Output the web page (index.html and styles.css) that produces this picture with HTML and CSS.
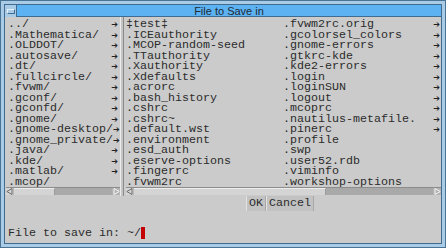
FILE: index.html
```html
<!DOCTYPE html>
<html lang="en">
<head>
  <meta charset="UTF-8" />
  <title>File to Save in</title>
  <link rel="stylesheet" href="styles.css">
</head>
<body>
  <div class="window">
    <div class="titlebar">
      <div class="menu-btn"><span></span></div>
      <div class="title">File to Save in</div>
    </div>
    <div class="content">
      <div class="panes">
        <!-- directories -->
        <div class="pane dirs">
          <ul class="list">
            <li class="dir">../</li>
            <li class="dir">.Mathematica/</li>
            <li class="dir">.OLDDOT/</li>
            <li class="dir">.autosave/</li>
            <li class="dir">.dt/</li>
            <li class="dir">.fullcircle/</li>
            <li class="dir">.fvwm/</li>
            <li class="dir">.gconf/</li>
            <li class="dir">.gconfd/</li>
            <li class="dir">.gnome/</li>
            <li class="dir">.gnome-desktop/</li>
            <li class="dir">.gnome_private/</li>
            <li class="dir">.java/</li>
            <li class="dir">.kde/</li>
            <li class="dir">.matlab/</li>
            <li>.mcop/</li>
          </ul>
          <div class="hscroll">
            <span class="sb-btn sb-left"><svg width="7" height="7" viewBox="0 0 7 7"><path d="M6 0.5 L0.8 3.5 L6 6.5 Z" fill="none" stroke="#6a6a6a" stroke-width="1"/></svg></span>
            <span class="sb-track"><span class="sb-thumb thumb-dirs"></span></span>
            <span class="sb-btn sb-right"><svg width="7" height="7" viewBox="0 0 7 7"><path d="M1 0.5 L6.2 3.5 L1 6.5 Z" fill="none" stroke="#f4f4f4" stroke-width="1"/></svg></span>
          </div>
        </div>
        <div class="sash"></div>
        <!-- files -->
        <div class="pane files">
          <div class="cols">
            <ul class="list col-a">
              <li>‡test‡</li>
              <li>.ICEauthority</li>
              <li>.MCOP-random-seed</li>
              <li>.TTauthority</li>
              <li>.Xauthority</li>
              <li>.Xdefaults</li>
              <li>.acrorc</li>
              <li>.bash_history</li>
              <li>.cshrc</li>
              <li>.cshrc~</li>
              <li>.default.wst</li>
              <li>.environment</li>
              <li>.esd_auth</li>
              <li>.eserve-options</li>
              <li>.fingerrc</li>
              <li>.fvwm2rc</li>
            </ul>
            <ul class="list col-b">
              <li class="dir">.fvwm2rc.orig</li>
              <li class="dir">.gcolorsel_colors</li>
              <li class="dir">.gnome-errors</li>
              <li class="dir">.gtkrc-kde</li>
              <li class="dir">.kde2-errors</li>
              <li class="dir">.login</li>
              <li class="dir">.loginSUN</li>
              <li class="dir">.logout</li>
              <li class="dir">.mcoprc</li>
              <li class="dir">.nautilus-metafile.</li>
              <li class="dir">.pinerc</li>
              <li>.profile</li>
              <li>.swp</li>
              <li>.user52.rdb</li>
              <li>.viminfo</li>
              <li>.workshop-options</li>
            </ul>
          </div>
          <div class="hscroll">
            <span class="sb-btn sb-left"><svg width="7" height="7" viewBox="0 0 7 7"><path d="M6 0.5 L0.8 3.5 L6 6.5 Z" fill="none" stroke="#6a6a6a" stroke-width="1"/></svg></span>
            <span class="sb-track"><span class="sb-thumb thumb-files"></span></span>
            <span class="sb-btn sb-right"><svg width="7" height="7" viewBox="0 0 7 7"><path d="M1 0.5 L6.2 3.5 L1 6.5 Z" fill="none" stroke="#f4f4f4" stroke-width="1"/></svg></span>
          </div>
        </div>
      </div>

      <div class="buttons">
        <button class="btn">OK</button><button class="btn">Cancel</button>
      </div>

      <div class="prompt">File to save in: ~/<span class="cursor"></span></div>
    </div>
  </div>
</body>
</html>
```

FILE: styles.css
```css
* {
  box-sizing: border-box;
  margin: 0;
  padding: 0;
}

body {
  width: 446px;
  height: 248px;
  overflow: hidden;
  background: #a9cbe6;
  font-family: "Liberation Mono", "DejaVu Sans Mono", monospace;
  font-size: 11.66px;
  color: #2c2c2c;
}

/* window frame */
.window {
  width: 446px;
  height: 248px;
  background: #a9cbe6;
  border: 1px solid #4a7496;
  padding: 3px 3px 3px 3px;
  display: flex;
  flex-direction: column;
}

.titlebar {
  display: flex;
  height: 13px;
  border: 1px solid #3f6c90;
  border-bottom: none;
}
.menu-btn {
  width: 12px;
  background: #a9cbe6;
  border-right: 1px solid #3f6c90;
  display: flex;
  align-items: center;
  justify-content: center;
}
.menu-btn span {
  width: 8px;
  height: 5px;
  border: 1px solid #3f6c90;
  border-top-color: #e6f2fb;
  border-left-color: #e6f2fb;
}
.title {
  flex: 1;
  background: #5db2f2;
  font-family: "Liberation Sans", Arial, sans-serif;
  font-size: 11px;
  line-height: 12px;
  color: #1e2a36;
  text-align: center;
  border-bottom: 1px solid #3f6c90;
}

.content {
  flex: 1;
  background: #cbcbcb;
  border: 1px solid #3f6c90;
  border-top: none;
  display: flex;
  flex-direction: column;
}

.panes {
  display: flex;
  height: 179px;
}

.pane {
  display: flex;
  flex-direction: column;
}
.dirs {
  width: 115px;
}
.files {
  flex: 1;
}

.sash {
  width: 4px;
  border-left: 1px solid #ececec;
  border-right: 1px solid #8a8a8a;
  background: #c4c4c4;
}

.list {
  list-style: none;
  padding-top: 2px;
  flex: 1;
}
.list li {
  height: 10.5px;
  line-height: 10.5px;
  white-space: nowrap;
  display: flex;
  justify-content: space-between;
}
.dirs .list {
  padding-left: 3px;
  padding-right: 2px;
}
.dir::after {
  content: "\2794";
  font-family: "DejaVu Sans", sans-serif;
  font-size: 8px;
  line-height: 12px;
  font-weight: bold;
  color: #222;
}

.cols {
  flex: 1;
  display: flex;
}
.col-a {
  width: 171px;
  padding-left: 2px;
}
.col-b {
  flex: 1;
  padding-right: 1px;
}

/* horizontal scrollbars */
.hscroll {
  height: 9px;
  display: flex;
  background: #a9a9a9;
  border-top: 1px solid #8c8c8c;
  margin-bottom: 1px;
}
.dirs .hscroll {
  margin-left: 1px;
}
.files .hscroll {
  margin-left: 2px;
}
.sb-btn {
  width: 8px;
  display: flex;
  align-items: center;
  justify-content: center;
}
.sb-left {
  background: #d6d6d6;
  border-right: 1px solid #b8b8b8;
}
.sb-right {
  background: #b3b3b3;
}
.sb-track {
  flex: 1;
}
.sb-thumb {
  display: block;
  height: 100%;
  background: #d4d4d4;
  border-top: 1px solid #ededed;
  border-right: 1px solid #9a9a9a;
}
.thumb-dirs {
  width: 41px;
}
.thumb-files {
  width: 192px;
}

/* OK / Cancel */
.buttons {
  display: flex;
  padding-left: 241px;
  height: 16px;
}
.btn {
  font: inherit;
  color: #2c2c2c;
  background: #c2c2c2;
  border: none;
  border-left: 1px solid #e2e2e2;
  border-right: 1px solid #a8a8a8;
  padding: 0 2px;
  height: 15px;
  line-height: 15px;
}

.prompt {
  margin-top: 14px;
  height: 14px;
  line-height: 14px;
  padding-left: 3px;
  display: flex;
  align-items: center;
  white-space: pre;
}
.cursor {
  display: inline-block;
  width: 4px;
  height: 12px;
  background: #c40000;
}
```
